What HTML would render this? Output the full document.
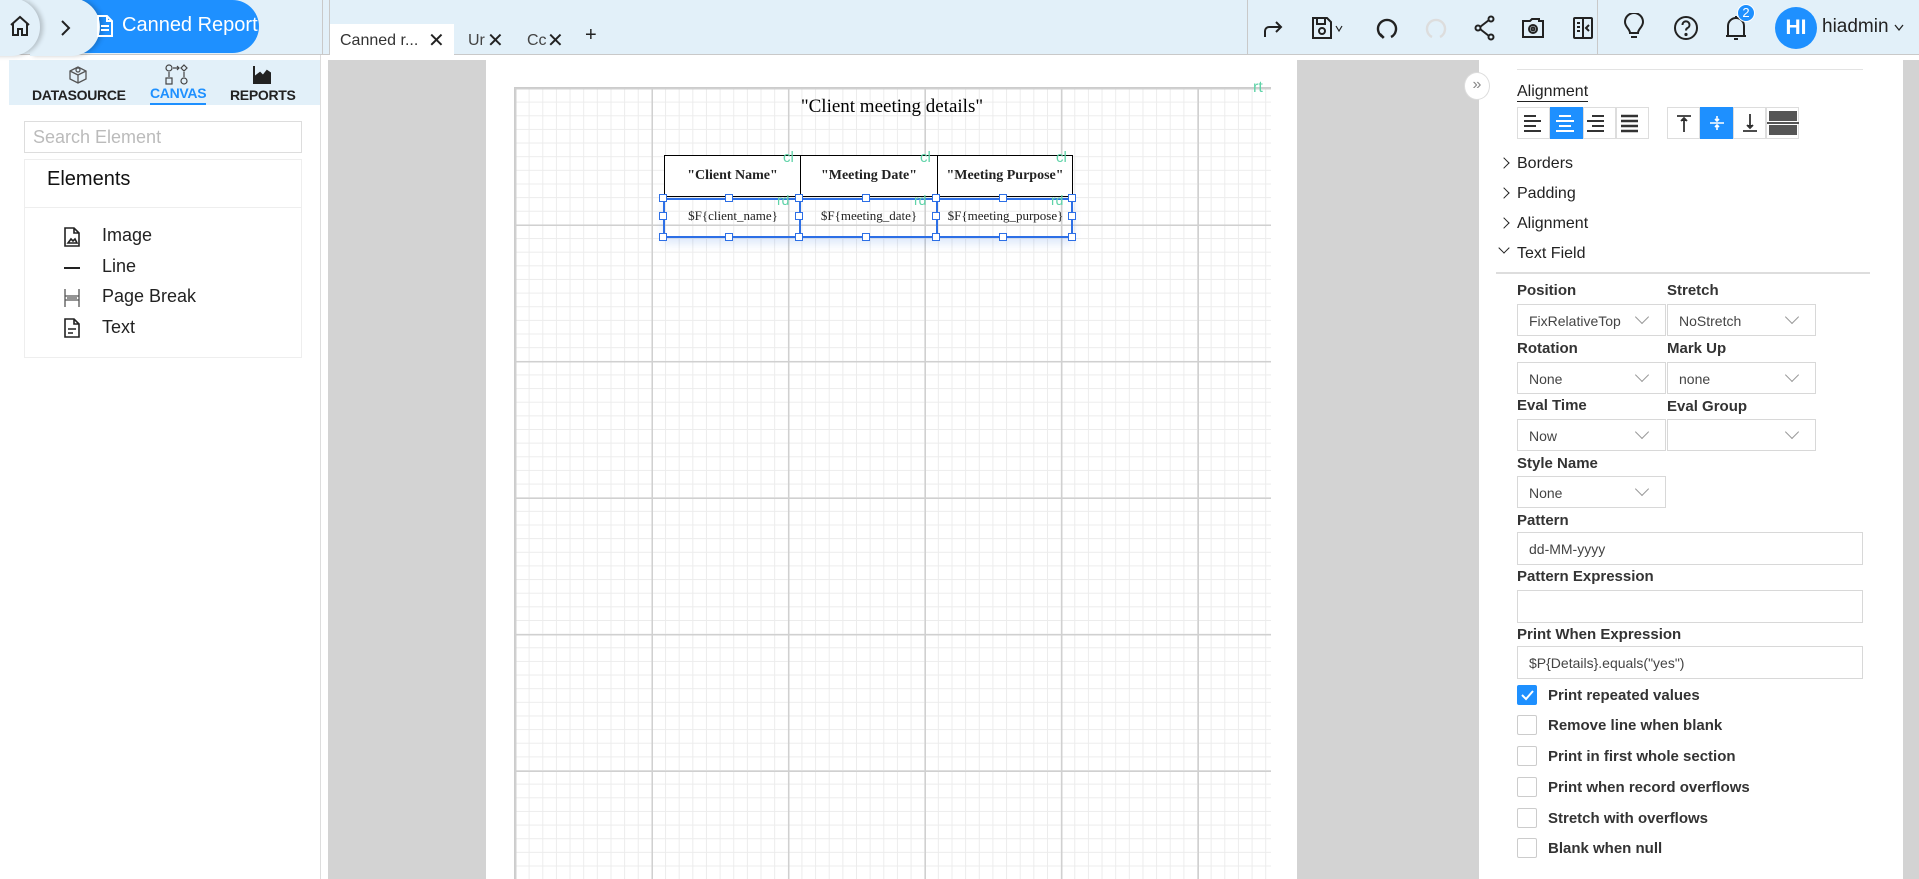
<!DOCTYPE html>
<html><head><meta charset="utf-8">
<style>
*{box-sizing:border-box;margin:0;padding:0}
body{width:1919px;height:879px;overflow:hidden;background:#fff;font-family:"Liberation Sans",sans-serif;color:#222;position:relative}
.a{position:absolute}
.hdr{left:0;top:0;width:1919px;height:55px;background:#e2f0f9;border-bottom:1px solid #c9c9c9}
.ic{position:absolute;stroke:#222;fill:none;stroke-width:2}
.lbl{position:absolute;font-size:15px;font-weight:bold;color:#333}
.sel{position:absolute;height:32px;border:1px solid #d8d8d8;font-size:14px;color:#444;padding:8px 0 0 11px;background:#fff}
.sel:after{content:"";position:absolute;right:18px;top:7px;width:9px;height:9px;border-right:1px solid #999;border-bottom:1px solid #999;transform:rotate(45deg)}
.inp{position:absolute;left:1517px;width:346px;height:33px;border:1px solid #d8d8d8;font-size:14px;color:#444;padding:8px 0 0 11px}
.cb{position:absolute;left:1517px;width:20px;height:20px;border:1px solid #ccc;border-radius:2px;background:#fff}
.cbl{position:absolute;left:1548px;font-size:15px;font-weight:bold;color:#333}
.sec{position:absolute;left:1517px;font-size:16px;color:#222}
.chev{position:absolute;left:1500px;width:8px;height:8px;border-right:1.5px solid #222;border-top:1.5px solid #222;transform:rotate(45deg)}
.ab{position:absolute;top:107px;width:33px;height:32px;border:1px solid #ddd;background:#fff}
.ab.on{background:#1e90ff;border-color:#1e90ff}
.el{position:absolute;left:102px;font-size:18px;color:#222}
.cell{position:absolute;border:1px solid #000;font-family:"Liberation Serif",serif;text-align:center}
.h{width:8px;height:8px;border:1.5px solid #2d6fe6;background:#fff;position:absolute}
</style></head><body>
<div class="a hdr"></div>
<!-- home -->
<div class="a" style="left:-10px;top:-2px;width:50px;height:58px;border-radius:0 29px 29px 0;background:#e2f0f9;box-shadow:3px 0 5px rgba(0,0,0,.2);z-index:3"></div>
<svg class="ic" style="left:8px;top:14px;z-index:4" width="24" height="24" viewBox="0 0 24 24"><path d="M3 11 12 3 21 11M5 9v12h5v-6h4v6h5V9"/></svg>
<div class="a" style="left:30px;top:-2px;width:70px;height:58px;border-radius:0 29px 29px 0;background:#e2f0f9;box-shadow:3px 0 5px rgba(0,0,0,.2);z-index:2"></div>
<svg class="ic" style="left:60px;top:19px;z-index:4" width="12" height="18" viewBox="0 0 12 18"><path d="M2 2l7 7-7 7"/></svg>
<div class="a" style="left:60px;top:0;width:199px;height:53px;border-radius:0 27px 27px 0;background:#1e90ff;z-index:1"></div>
<svg class="ic" style="left:96px;top:15px;z-index:4;stroke:#fff" width="18" height="22" viewBox="0 0 18 22"><path d="M2 1h9l5 5v15H2zM11 1v5h5M5 11h8M5 15h8"/></svg>
<div class="a" style="left:122px;top:14px;color:#fff;font-size:20px;z-index:4">Canned Report</div>
<div class="a" style="left:322px;top:0;width:1px;height:55px;background:#c9c9c9"></div>
<div class="a" style="left:329px;top:0;width:1px;height:55px;background:#c9c9c9"></div>
<!-- tabs -->
<div class="a" style="left:330px;top:24px;width:124px;height:31px;background:#fff"></div>
<div class="a" style="left:340px;top:32px;font-size:16px;color:#333">Canned r...</div>
<div class="a" style="left:428px;top:28px;font-size:20px;color:#222">✕</div>
<div class="a" style="left:468px;top:32px;font-size:16px;color:#444">Ur</div>
<div class="a" style="left:487px;top:28px;font-size:20px">✕</div>
<div class="a" style="left:527px;top:32px;font-size:16px;color:#444">Cc</div>
<div class="a" style="left:547px;top:28px;font-size:20px">✕</div>
<div class="a" style="left:585px;top:24px;font-size:20px">+</div>
<div class="a" style="left:1247px;top:0;width:1px;height:55px;background:#c9c9c9"></div>
<div class="a" style="left:1597px;top:0;width:1px;height:55px;background:#c9c9c9"></div>
<!-- toolbar icons -->
<svg class="ic" style="left:1262px;top:17px" width="22" height="22" viewBox="0 0 22 22"><path d="M3 20v-6a4 4 0 0 1 4-4h12M14 5l5 5-5 5"/></svg>
<svg class="ic" style="left:1311px;top:16px" width="34" height="24" viewBox="0 0 34 24"><path d="M2 2h14l4 4v16H2zM6 2v6h8V2"/><circle cx="11" cy="15" r="3"/><path d="M25 10l3 5 3-5" stroke-width="1.2"/></svg>
<svg class="ic" style="left:1375px;top:16px" width="24" height="24" viewBox="0 0 24 24"><path d="M8 21A9 9 0 1 1 16 21M5 18l3 3-1 1" stroke-width="2.4"/></svg>
<svg class="ic" style="left:1424px;top:16px;stroke:#ddd" width="24" height="24" viewBox="0 0 24 24"><path d="M8 21A9 9 0 1 1 16 21" stroke-width="2.4"/></svg>
<svg class="ic" style="left:1474px;top:15px" width="22" height="26" viewBox="0 0 22 26"><circle cx="17" cy="4" r="2.5"/><circle cx="4" cy="13" r="2.5"/><circle cx="17" cy="22" r="2.5"/><path d="M6 12l9-7M6 14l9 7"/></svg>
<svg class="ic" style="left:1521px;top:17px" width="24" height="22" viewBox="0 0 24 22"><path d="M2 4h7l2-2h7v2h4v16H2z"/><circle cx="12" cy="12" r="4"/><circle cx="12" cy="12" r="1.5"/></svg>
<svg class="ic" style="left:1572px;top:16px" width="22" height="24" viewBox="0 0 22 24"><rect x="2" y="2" width="18" height="20" rx="1"/><path d="M11 2v20M5 7h3M5 11h3M5 15h3M17 9l-3 3 3 3"/></svg>
<svg class="ic" style="left:1622px;top:13px" width="24" height="28" viewBox="0 0 24 28"><path d="M8 20c0-4-5-6-5-11a9 9 0 0 1 18 0c0 5-5 7-5 11zM9 24h6"/></svg>
<svg class="ic" style="left:1673px;top:15px" width="26" height="26" viewBox="0 0 26 26"><circle cx="13" cy="13" r="11"/><path d="M9.5 10a3.5 3.5 0 1 1 5 3c-1 .6-1.5 1.3-1.5 2.5"/><circle cx="13" cy="19.5" r=".6" fill="#222"/></svg>
<svg class="ic" style="left:1724px;top:14px" width="24" height="28" viewBox="0 0 24 28"><path d="M4 22V12a8 8 0 0 1 16 0v10zM2 22h20M10 25h4M12 2v2"/></svg>
<div class="a" style="left:1737px;top:4px;width:18px;height:18px;border-radius:50%;background:#1e90ff;border:1px solid #fff;color:#fff;font-size:13px;text-align:center;line-height:16px">2</div>
<div class="a" style="left:1775px;top:7px;width:42px;height:42px;border-radius:50%;background:#1e90ff;color:#fff;font-size:21px;font-weight:bold;text-align:center;line-height:42px">HI</div>
<div class="a" style="left:1822px;top:16px;font-size:19px;color:#222">hiadmin</div>
<svg class="ic" style="left:1894px;top:24px;stroke-width:1.3" width="10" height="8" viewBox="0 0 10 8"><path d="M1 1l4 5 4-5"/></svg>
<!-- left panel -->
<div class="a" style="left:9px;top:60px;width:311px;height:45px;background:#e2f0f9"></div>
<svg class="ic" style="left:68px;top:65px;stroke:#555;stroke-width:1.3" width="20" height="20" viewBox="0 0 20 20"><path d="M2 6l8-4 8 4v8l-8 4-8-4zM2 6l8 4 8-4M10 10v8"/><circle cx="10" cy="5" r="2"/></svg>
<div class="a" style="left:32px;top:87px;font-size:14px;font-weight:bold;color:#222;letter-spacing:-.3px">DATASOURCE</div>
<svg class="ic" style="left:163px;top:64px;stroke:#444;stroke-width:1.2" width="28" height="22" viewBox="0 0 28 22"><circle cx="6" cy="4" r="3"/><path d="M10 4h6M14 2l2 2-2 2M21 1l3 3-3 3-3-3z"/><rect x="3" y="14" width="6" height="6"/><circle cx="21" cy="17" r="3"/><path d="M6 13V8M21 8v5"/></svg>
<div class="a" style="left:150px;top:85px;font-size:14px;font-weight:bold;color:#1e90ff;letter-spacing:-.3px">CANVAS</div>
<div class="a" style="left:150px;top:103px;width:56px;height:2px;background:#1e90ff"></div>
<svg class="ic" style="left:252px;top:65px;stroke:#222" width="20" height="20" viewBox="0 0 20 20"><path d="M2 1v17h17" /><path d="M4 17V11l4-3 3 3 4-5 3 2v9z" fill="#222"/></svg>
<div class="a" style="left:230px;top:87px;font-size:14px;font-weight:bold;color:#222;letter-spacing:-.3px">REPORTS</div>
<div class="a" style="left:24px;top:121px;width:278px;height:32px;border:1px solid #ddd;font-size:18px;color:#bbb;padding:5px 0 0 8px">Search Element</div>
<div class="a" style="left:24px;top:159px;width:278px;height:199px;border:1px solid #eee"></div>
<div class="a" style="left:24px;top:207px;width:278px;height:1px;background:#eee"></div>
<div class="a" style="left:47px;top:168px;font-size:20px;color:#111">Elements</div>
<svg class="ic" style="left:64px;top:227px;stroke-width:1.6" width="16" height="20" viewBox="0 0 16 20"><path d="M1 1h9l5 5v13H1zM10 1v5h5M4 16l3-4 2 2 2-2 2 4z"/></svg>
<div class="el" style="top:225px">Image</div>
<div class="a" style="left:64px;top:267px;width:16px;height:2px;background:#222"></div>
<div class="el" style="top:256px">Line</div>
<svg class="ic" style="left:64px;top:288px;stroke-width:1.3;stroke:#555" width="16" height="20" viewBox="0 0 16 20"><path d="M1 1v18M15 1v18M1 8h14M1 12h14M3 10h10" /></svg>
<div class="el" style="top:286px">Page Break</div>
<svg class="ic" style="left:64px;top:318px;stroke-width:1.6" width="16" height="20" viewBox="0 0 16 20"><path d="M1 1h9l5 5v13H1zM10 1v5h5M4 11h8M4 15h5"/></svg>
<div class="el" style="top:317px">Text</div>
<div class="a" style="left:320px;top:55px;width:1px;height:824px;background:#ddd"></div>
<!-- canvas area -->
<div class="a" style="left:328px;top:60px;width:158px;height:819px;background:#d3d3d3"></div>
<div class="a" style="left:1297px;top:60px;width:182px;height:819px;background:#d3d3d3"></div>
<div class="a" style="left:1903px;top:60px;width:16px;height:819px;background:#d3d3d3"></div>
<div class="a" style="left:514px;top:87px;width:757px;height:792px;border-top:1.5px solid #ccc;border-left:1.5px solid #ccc;
background:
linear-gradient(90deg,#d0d0d0 1.5px,transparent 1.5px) 0 0/136.5px 136.5px,
linear-gradient(#d0d0d0 1.5px,transparent 1.5px) 0 0/136.5px 136.5px,
linear-gradient(90deg,#ececec 1px,transparent 1px) 0 0/13.65px 13.65px,
linear-gradient(#ececec 1px,transparent 1px) 0 0/13.65px 13.65px,#fff"></div>
<div class="a" style="left:1253px;top:79px;color:#5fd3a8;font-size:16px">rt</div>
<div class="a" style="left:700px;top:96px;width:384px;text-align:center;font-family:'Liberation Serif',serif;font-size:19px;color:#000">"Client meeting details"</div>
<div class="cell" style="left:664px;top:155px;width:137px;height:42px;font-weight:bold;font-size:14px;padding-top:12px;background:#fff">"Client Name"</div>
<div class="cell" style="left:800px;top:155px;width:138px;height:42px;font-weight:bold;font-size:14px;padding-top:12px;background:#fff">"Meeting Date"</div>
<div class="cell" style="left:937px;top:155px;width:136px;height:42px;font-weight:bold;font-size:14px;padding-top:12px;background:#fff">"Meeting Purpose"</div>
<div class="a" style="left:783px;top:149px;color:#5fd3a8;font-size:15px">cl</div>
<div class="a" style="left:920px;top:149px;color:#5fd3a8;font-size:15px">cl</div>
<div class="a" style="left:1056px;top:149px;color:#5fd3a8;font-size:15px">cl</div>
<div class="a" style="left:663px;top:198px;width:410px;height:40px;border:2px solid #2d6fe6;box-shadow:0 6px 8px rgba(45,111,230,.15)"></div>
<div class="a" style="left:799px;top:198px;width:2px;height:40px;background:#2d6fe6"></div>
<div class="a" style="left:936px;top:198px;width:2px;height:40px;background:#2d6fe6"></div>
<div class="a" style="left:665px;top:208px;width:136px;text-align:center;font-family:'Liberation Serif',serif;font-size:13px">$F{client_name}</div>
<div class="a" style="left:801px;top:208px;width:136px;text-align:center;font-family:'Liberation Serif',serif;font-size:13px">$F{meeting_date}</div>
<div class="a" style="left:938px;top:208px;width:135px;text-align:center;font-family:'Liberation Serif',serif;font-size:13px">$F{meeting_purpose}</div>
<div class="a" style="left:777px;top:192px;color:#5fd3a8;font-size:14px">rd</div>
<div class="a" style="left:914px;top:192px;color:#5fd3a8;font-size:14px">rd</div>
<div class="a" style="left:1051px;top:192px;color:#5fd3a8;font-size:14px">rd</div>
<div class="h" style="left:659px;top:194px"></div><div class="h" style="left:725px;top:194px"></div><div class="h" style="left:795px;top:194px"></div><div class="h" style="left:862px;top:194px"></div><div class="h" style="left:932px;top:194px"></div><div class="h" style="left:999px;top:194px"></div><div class="h" style="left:1068px;top:194px"></div>
<div class="h" style="left:659px;top:212px"></div><div class="h" style="left:795px;top:212px"></div><div class="h" style="left:932px;top:212px"></div><div class="h" style="left:1068px;top:212px"></div>
<div class="h" style="left:659px;top:233px"></div><div class="h" style="left:725px;top:233px"></div><div class="h" style="left:795px;top:233px"></div><div class="h" style="left:862px;top:233px"></div><div class="h" style="left:932px;top:233px"></div><div class="h" style="left:999px;top:233px"></div><div class="h" style="left:1068px;top:233px"></div>
<!-- right panel -->
<div class="a" style="left:1464px;top:72px;width:26px;height:28px;border-radius:50%;background:#fff;border:1px solid #ddd;color:#888;font-size:16px;text-align:center;line-height:24px">»</div>
<div class="a" style="left:1517px;top:69px;width:346px;height:1px;background:#e3e3e3"></div>
<div class="a" style="left:1517px;top:83px;font-size:16px;color:#222;border-bottom:1.5px solid #222;line-height:18px">Alignment</div>
<div class="ab" style="left:1517px"></div><div class="ab on" style="left:1550px"></div><div class="ab" style="left:1583px"></div><div class="ab" style="left:1616px"></div>
<div class="ab" style="left:1667px"></div><div class="ab on" style="left:1700px"></div><div class="ab" style="left:1733px"></div><div class="ab" style="left:1766px"></div>
<svg class="a" style="left:1517px;top:107px" width="132" height="32"><g stroke="#333" stroke-width="2"><path d="M7 9h12M7 14h17M7 19h12M7 24h17"/><path d="M104 9h17M104 14h17M104 19h17M104 24h17" stroke-width="2.5"/><path d="M75 9h12M70 14h17M75 19h12M70 24h17"/></g><path d="M42 9h12M39 14h18M42 19h12M39 24h18" stroke="#fff" stroke-width="2"/></svg>
<svg class="a" style="left:1667px;top:107px" width="132" height="32"><g stroke="#333" stroke-width="1.8"><path d="M10 9h14M17 11v14M14 14l3-3 3 3"/><path d="M76 24h14M83 7v14M80 18l3 3 3-3"/></g><path d="M43 16h14M50 9v5M48 12l2 2 2-2M50 23v-5M48 20l2-2 2 2" stroke="#fff" stroke-width="1.6" fill="none"/><rect x="102" y="4" width="28" height="10" fill="#555"/><rect x="102" y="18" width="28" height="10" fill="#555"/><path d="M100 16h32" stroke="#555" stroke-width="2"/></svg>
<div class="chev" style="top:159px"></div><div class="sec" style="top:155px">Borders</div>
<div class="chev" style="top:189px"></div><div class="sec" style="top:185px">Padding</div>
<div class="chev" style="top:219px"></div><div class="sec" style="top:215px">Alignment</div>
<div class="a" style="left:1500px;top:244px;width:8px;height:8px;border-right:1.5px solid #222;border-bottom:1.5px solid #222;transform:rotate(45deg)"></div>
<div class="sec" style="top:245px">Text Field</div>
<div class="a" style="left:1496px;top:272px;width:374px;height:1.5px;background:#ddd"></div>
<div class="lbl" style="left:1517px;top:282px">Position</div><div class="lbl" style="left:1667px;top:282px">Stretch</div>
<div class="sel" style="left:1517px;top:304px;width:149px">FixRelativeTop</div><div class="sel" style="left:1667px;top:304px;width:149px">NoStretch</div>
<div class="lbl" style="left:1517px;top:340px">Rotation</div><div class="lbl" style="left:1667px;top:340px">Mark Up</div>
<div class="sel" style="left:1517px;top:362px;width:149px">None</div><div class="sel" style="left:1667px;top:362px;width:149px">none</div>
<div class="lbl" style="left:1517px;top:397px">Eval Time</div><div class="lbl" style="left:1667px;top:398px">Eval Group</div>
<div class="sel" style="left:1517px;top:419px;width:149px">Now</div><div class="sel" style="left:1667px;top:419px;width:149px"></div>
<div class="lbl" style="left:1517px;top:455px">Style Name</div>
<div class="sel" style="left:1517px;top:476px;width:149px">None</div>
<div class="lbl" style="left:1517px;top:512px">Pattern</div>
<div class="inp" style="top:532px">dd-MM-yyyy</div>
<div class="lbl" style="left:1517px;top:568px">Pattern Expression</div>
<div class="inp" style="top:590px"></div>
<div class="lbl" style="left:1517px;top:626px">Print When Expression</div>
<div class="inp" style="top:646px">$P{Details}.equals("yes")</div>
<div class="cb" style="top:685px;background:#1e90ff;border-color:#1e90ff"><svg width="18" height="18" style="position:absolute;left:0;top:0"><path d="M4 9l4 4 7-8" stroke="#fff" stroke-width="2" fill="none"/></svg></div>
<div class="cbl" style="top:687px">Print repeated values</div>
<div class="cb" style="top:715px"></div><div class="cbl" style="top:717px">Remove line when blank</div>
<div class="cb" style="top:746px"></div><div class="cbl" style="top:748px">Print in first whole section</div>
<div class="cb" style="top:777px"></div><div class="cbl" style="top:779px">Print when record overflows</div>
<div class="cb" style="top:808px"></div><div class="cbl" style="top:810px">Stretch with overflows</div>
<div class="cb" style="top:838px"></div><div class="cbl" style="top:840px">Blank when null</div>
</body></html>
